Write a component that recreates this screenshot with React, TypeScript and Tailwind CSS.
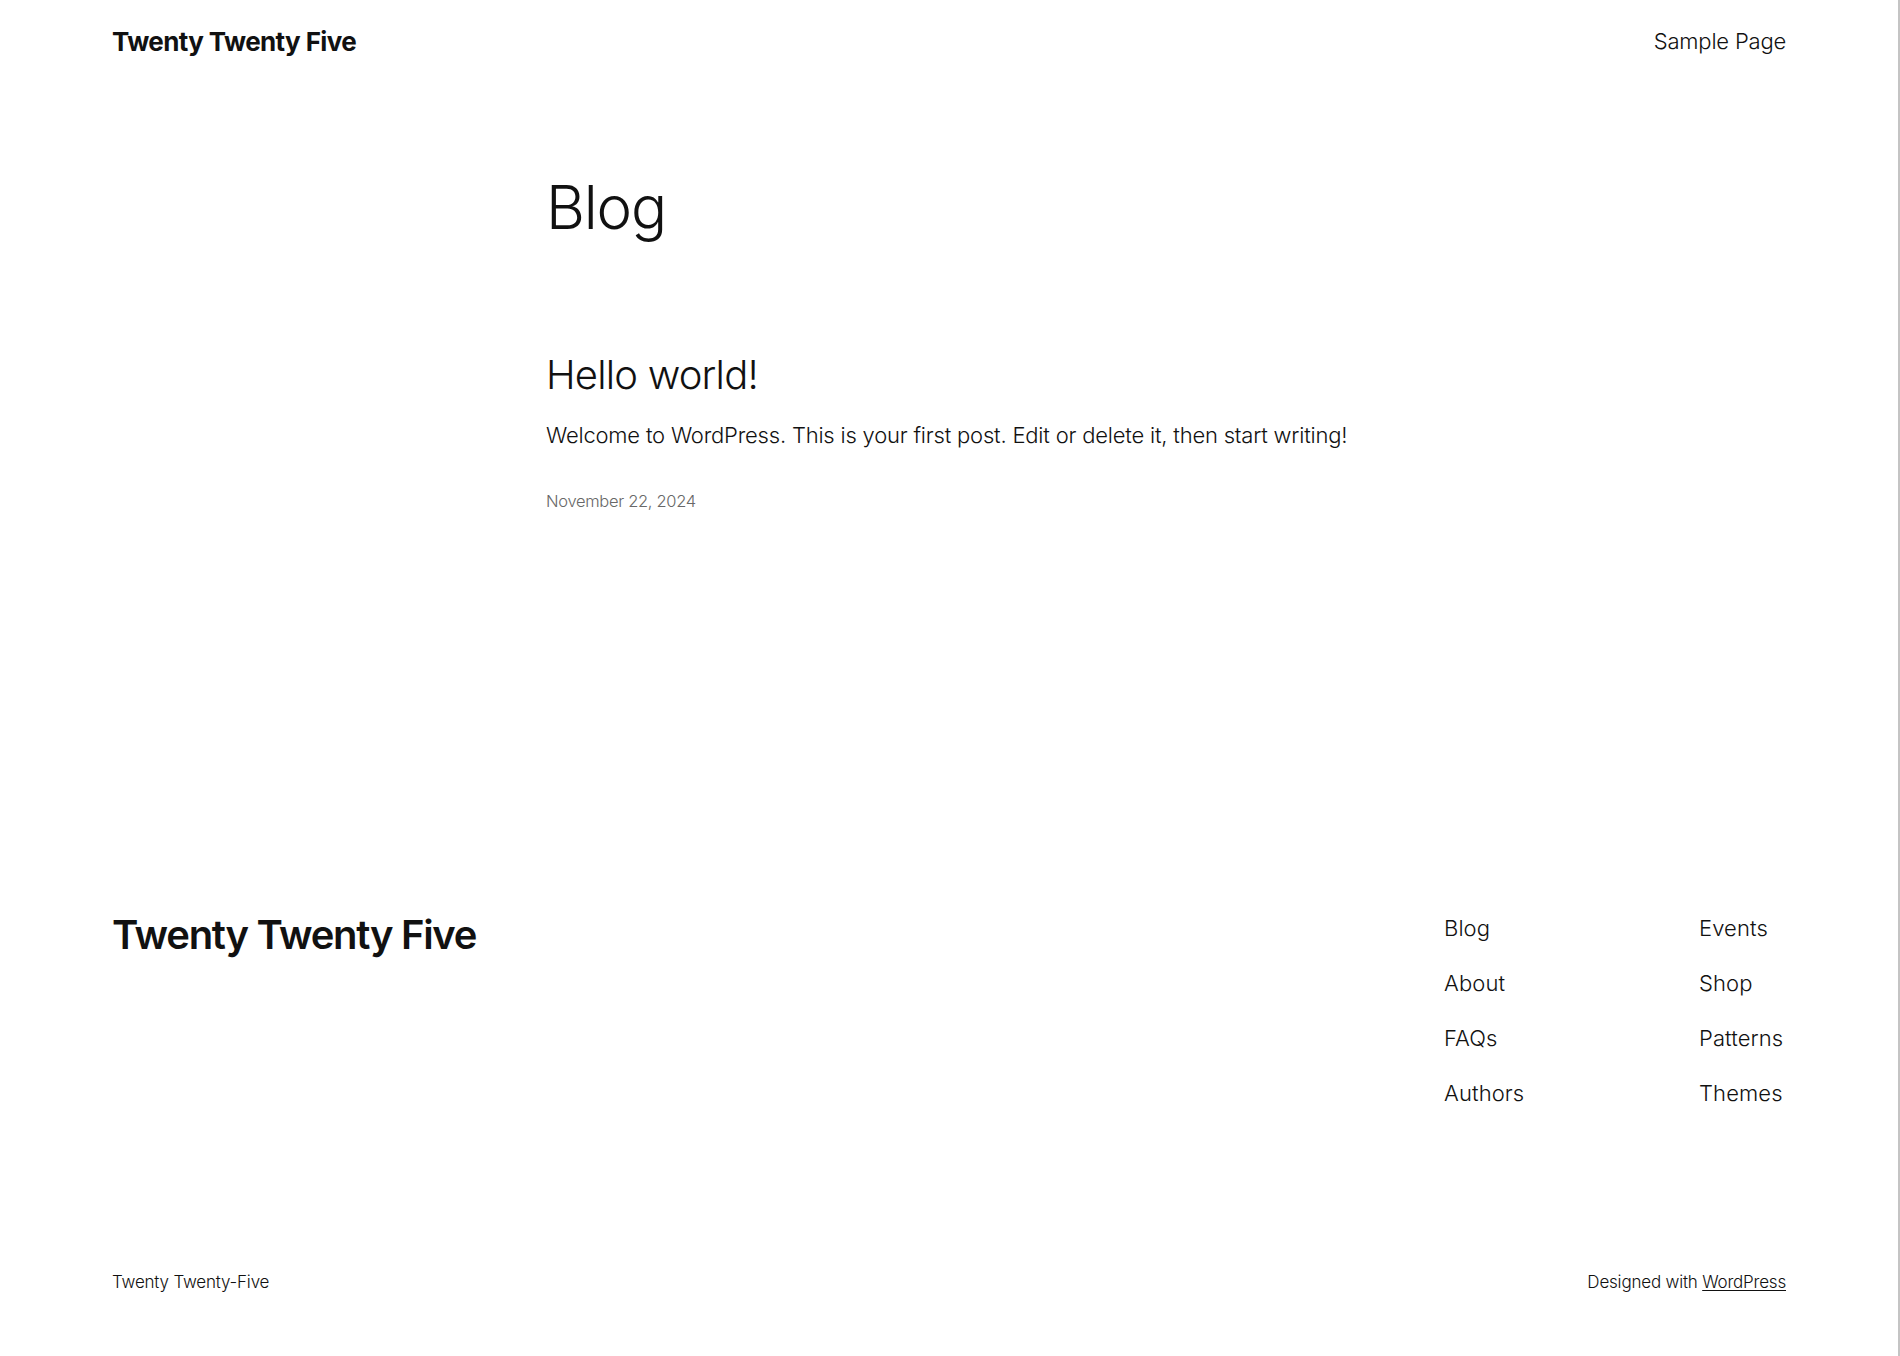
const navLeft = ['Blog', 'About', 'FAQs', 'Authors'];
const navRight = ['Events', 'Shop', 'Patterns', 'Themes'];

export default function App() {
  return (
    <div
      className="min-h-[1356px] bg-white text-[#111111] border-r-2 border-[#c4c4c4]"
      style={{ fontFamily: 'Inter, "Liberation Sans", sans-serif' }}
    >
      {/* Header */}
      <header className="h-[82px] px-[112px] flex items-center justify-between">
        <a className="text-[26px] font-bold tracking-[-0.6px]">Twenty Twenty Five</a>
        <nav>
          <a className="text-[22px] font-light tracking-[-0.2px]">Sample Page</a>
        </nav>
      </header>

      {/* Main */}
      <main className="w-[806px] mx-auto pt-[95px]">
        <h1 className="text-[60px] leading-none font-light tracking-[-1.2px]">Blog</h1>
        <article className="mt-[114px]">
          <h2 className="text-[40px] leading-[1.2] font-light tracking-[-0.8px]">Hello world!</h2>
          <p className="mt-[20px] text-[22px] leading-[1.5] font-light tracking-[-0.2px]">
            Welcome to WordPress. This is your first post. Edit or delete it, then start writing!
          </p>
          <div className="mt-[37px] text-[16.5px] leading-[1.5] font-light text-[#686868] tracking-[-0.3px]">
            November 22, 2024
          </div>
        </article>
      </main>

      {/* Footer */}
      <footer className="px-[112px] mt-[398px]">
        <div className="flex items-start justify-between">
          <a className="text-[40px] leading-[1.15] font-semibold tracking-[-1.3px]">Twenty Twenty Five</a>
          <div className="w-[342px] grid grid-cols-[255px_1fr]">
            <ul className="flex flex-col gap-[22px]">
              {navLeft.map((item) => (
                <li key={item} className="text-[22px] leading-[1.5] font-light tracking-[0.1px]">
                  {item}
                </li>
              ))}
            </ul>
            <ul className="flex flex-col gap-[22px]">
              {navRight.map((item) => (
                <li key={item} className="text-[22px] leading-[1.5] font-light tracking-[0.1px]">
                  {item}
                </li>
              ))}
            </ul>
          </div>
        </div>
        <div className="mt-[160px] flex items-center justify-between text-[17px] leading-[1.5] font-light tracking-[-0.2px]">
          <span>Twenty Twenty-Five</span>
          <span>
            Designed with <a className="underline underline-offset-2">WordPress</a>
          </span>
        </div>
      </footer>
    </div>
  );
}
